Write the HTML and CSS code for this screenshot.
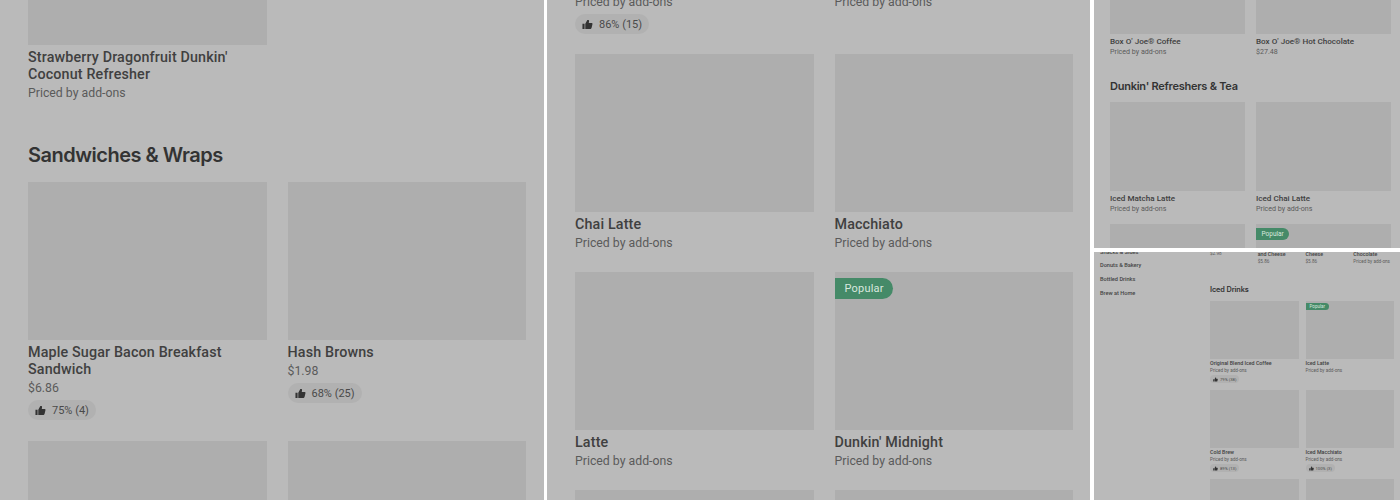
FILE: index.html
```html
<!DOCTYPE html>
<html lang="en">
<head>
    <meta charset="UTF-8">
    <title>Menu</title>
    <link rel="stylesheet" href="styles.css">
</head>
<body>
<svg class="defs" width="0" height="0">
    <symbol id="thumb" viewBox="0 0 12 12"><path d="M0.5 5.2h2.3v5.6H0.5zM3.6 5.2 5.8 1h.9c.7 0 1.1.5 1 1.2L7.4 4.4h3c.7 0 1.2.6 1 1.3l-1 4.2c-.1.5-.5.9-1 .9H3.6z"/></symbol>
</svg>
<div class="mosaic">

    <section class="panel panel-left">
        <div class="scroll">
            <div class="grid two">
                <div class="card">
                    <div class="photo cut"></div>
                    <div class="name">Strawberry Dragonfruit Dunkin' Coconut Refresher</div>
                    <div class="sub">Priced by add-ons</div>
                </div>
            </div>
            <h2>Sandwiches &amp; Wraps</h2>
            <div class="grid two">
                <div class="card">
                    <div class="photo"></div>
                    <div class="name">Maple Sugar Bacon Breakfast Sandwich</div>
                    <div class="sub">$6.86</div>
                    <div class="rating"><svg><use href="#thumb"/></svg>75% (4)</div>
                </div>
                <div class="card">
                    <div class="photo"></div>
                    <div class="name">Hash Browns</div>
                    <div class="sub">$1.98</div>
                    <div class="rating"><svg><use href="#thumb"/></svg>68% (25)</div>
                </div>
                <div class="card"><div class="photo"></div></div>
                <div class="card"><div class="photo"></div></div>
            </div>
        </div>
    </section>

    <section class="panel panel-mid">
        <div class="scroll">
            <div class="grid two">
                <div class="card">
                    <div class="sub">Priced by add-ons</div>
                    <div class="rating"><svg><use href="#thumb"/></svg>86% (15)</div>
                </div>
                <div class="card">
                    <div class="sub">Priced by add-ons</div>
                </div>
                <div class="card">
                    <div class="photo"></div>
                    <div class="name">Chai Latte</div>
                    <div class="sub">Priced by add-ons</div>
                </div>
                <div class="card">
                    <div class="photo"></div>
                    <div class="name">Macchiato</div>
                    <div class="sub">Priced by add-ons</div>
                </div>
                <div class="card">
                    <div class="photo"></div>
                    <div class="name">Latte</div>
                    <div class="sub">Priced by add-ons</div>
                </div>
                <div class="card">
                    <div class="photo"><span class="badge">Popular</span></div>
                    <div class="name">Dunkin' Midnight</div>
                    <div class="sub">Priced by add-ons</div>
                </div>
                <div class="card"><div class="photo"></div></div>
                <div class="card"><div class="photo"></div></div>
            </div>
        </div>
    </section>

    <section class="panel panel-top">
        <div class="scroll">
            <div class="grid two">
                <div class="card">
                    <div class="photo cut"></div>
                    <div class="name">Box O' Joe® Coffee</div>
                    <div class="sub">Priced by add-ons</div>
                </div>
                <div class="card">
                    <div class="photo cut"></div>
                    <div class="name">Box O' Joe® Hot Chocolate</div>
                    <div class="sub">$27.48</div>
                </div>
            </div>
            <h2>Dunkin' Refreshers &amp; Tea</h2>
            <div class="grid two">
                <div class="card">
                    <div class="photo"></div>
                    <div class="name">Iced Matcha Latte</div>
                    <div class="sub">Priced by add-ons</div>
                </div>
                <div class="card">
                    <div class="photo"></div>
                    <div class="name">Iced Chai Latte</div>
                    <div class="sub">Priced by add-ons</div>
                </div>
                <div class="card"><div class="photo"></div></div>
                <div class="card"><div class="photo"><span class="badge">Popular</span></div></div>
            </div>
        </div>
    </section>

    <section class="panel panel-bottom">
        <div class="scroll">
            <nav class="side">
                <a>Snacks &amp; Sides</a>
                <a>Donuts &amp; Bakery</a>
                <a>Bottled Drinks</a>
                <a>Brew at Home</a>
            </nav>
            <div class="content">
                <div class="grid four">
                    <div class="card"><div class="sub">$2.98</div></div>
                    <div class="card"><div class="name">and Cheese</div><div class="sub">$5.86</div></div>
                    <div class="card"><div class="name">Cheese</div><div class="sub">$5.86</div></div>
                    <div class="card"><div class="name">Chocolate</div><div class="sub">Priced by add-ons</div></div>
                </div>
                <h2>Iced Drinks</h2>
                <div class="grid two">
                    <div class="card">
                        <div class="photo"></div>
                        <div class="name">Original Blend Iced Coffee</div>
                        <div class="sub">Priced by add-ons</div>
                        <div class="rating"><svg><use href="#thumb"/></svg>79% (38)</div>
                    </div>
                    <div class="card">
                        <div class="photo"><span class="badge">Popular</span></div>
                        <div class="name">Iced Latte</div>
                        <div class="sub">Priced by add-ons</div>
                    </div>
                    <div class="card">
                        <div class="photo"></div>
                        <div class="name">Cold Brew</div>
                        <div class="sub">Priced by add-ons</div>
                        <div class="rating"><svg><use href="#thumb"/></svg>89% (13)</div>
                    </div>
                    <div class="card">
                        <div class="photo"></div>
                        <div class="name">Iced Macchiato</div>
                        <div class="sub">Priced by add-ons</div>
                        <div class="rating"><svg><use href="#thumb"/></svg>100% (3)</div>
                    </div>
                    <div class="card"><div class="photo"></div></div>
                    <div class="card"><div class="photo"></div></div>
                </div>
            </div>
        </div>
    </section>

</div>
</body>
</html>
```

FILE: styles.css
```css
html, body{
    margin: 0;
    height: 500px;
    overflow: hidden;
    background: #fff;
}
.defs{
    display: none;
}
.mosaic{
    display: grid;
    grid-template-columns: 544px 543px 307px;
    grid-template-rows: 248px 248px;
    column-gap: 3px;
    row-gap: 4px;
    width: 1400px;
    height: 500px;
    font-family: "Roboto", "Liberation Sans", sans-serif;
}
.panel{
    background: #bababa;
    overflow: hidden;
    color: #404040;
}
.panel-left, .panel-mid{
    grid-row: 1 / 3;
}
.panel-top{
    grid-column: 3;
    grid-row: 1;
    margin-left: 1px;
}
.panel-bottom{
    grid-column: 3;
    grid-row: 2;
    margin-left: 1px;
}

.grid{
    display: grid;
}
.two{
    grid-template-columns: 1fr 1fr;
}
.four{
    grid-template-columns: repeat(4, 1fr);
}
.photo{
    position: relative;
    background: #aeaeae;
}
.name{
    font-weight: 500;
}
.sub{
    color: #5a5a5a;
}
h2{
    margin: 0;
    font-family: "Inter", "Liberation Sans", sans-serif;
    font-weight: 600;
    color: #333;
}
.rating{
    display: flex;
    align-items: center;
    background: #b1b1b1;
    color: #4a4a4a;
    width: max-content;
}
.rating svg{
    fill: #333;
}
.badge{
    position: absolute;
    left: 0;
    background: #458a68;
    color: #d8e8df;
    border-radius: 0 999px 999px 0;
}

/* large panels, same scale */
.panel-left .scroll, .panel-mid .scroll{
    padding: 0 18px 0 28px;
}
.panel-left .grid, .panel-mid .grid{
    column-gap: 21px;
    row-gap: 20px;
}
.panel-left .photo, .panel-mid .photo{
    height: 158px;
}
.panel-left .name, .panel-mid .name{
    margin-top: 4px;
    font-size: 14.3px;
    line-height: 17px;
    letter-spacing: 0.15px;
}
.panel-left .sub, .panel-mid .sub{
    margin-top: 2px;
    font-size: 12.3px;
    line-height: 17px;
}
.panel-left .rating, .panel-mid .rating{
    margin-top: 3px;
    gap: 6px;
    height: 20px;
    padding: 0 7px;
    border-radius: 10px;
    font-size: 11px;
}
.panel-left .rating svg, .panel-mid .rating svg{
    width: 11px;
    height: 11px;
}
.panel-left .badge, .panel-mid .badge{
    top: 6px;
    padding: 0 9px 0 10px;
    line-height: 21px;
    font-size: 11px;
    letter-spacing: 0.2px;
}
.panel-left .cut{
    height: 45px;
}
.panel-left .grid{
    row-gap: 21px;
}
.panel-left h2{
    margin: 41px 0 15px;
    font-size: 20px;
    line-height: 24px;
    letter-spacing: -0.5px;
}
.panel-mid .scroll{
    margin-top: -8px;
    padding-right: 17px;
}
.panel-mid .rating{
    margin-top: 3px;
}

/* top right panel */
.panel-top .scroll{
    padding: 0 9px 0 16px;
}
.panel-top .grid{
    column-gap: 11px;
    row-gap: 10px;
}
.panel-top .photo{
    height: 89px;
}
.panel-top .cut{
    height: 34px;
}
.panel-top .name{
    margin-top: 2px;
    font-size: 8.1px;
    line-height: 10px;
}
.panel-top .sub{
    margin-top: 1px;
    font-size: 7.1px;
    line-height: 10px;
}
.panel-top .badge{
    top: 4px;
    padding: 0 5.5px;
    line-height: 12px;
    font-size: 6.5px;
}
.panel-top h2{
    margin: 22px 0 9px;
    font-size: 11px;
    line-height: 14px;
    letter-spacing: -0.25px;
}

/* bottom right panel */
.panel-bottom .scroll{
    display: flex;
    margin-top: -2.5px;
}
.side{
    display: flex;
    flex-direction: column;
    gap: 4.7px;
    flex: none;
    width: 116px;
    box-sizing: border-box;
    margin-top: -2px;
    padding-left: 6px;
    font-size: 5.6px;
    font-weight: 500;
    line-height: 9px;
    color: #444;
}
.content{
    flex: 1;
    padding-right: 6px;
}
.panel-bottom .grid{
    column-gap: 7px;
    row-gap: 7px;
}
.panel-bottom .photo{
    height: 58px;
}
.panel-bottom .name{
    margin-top: 1px;
    font-size: 5.3px;
    line-height: 7px;
}
.panel-bottom .sub{
    font-size: 4.64px;
    line-height: 7px;
}
.panel-bottom .rating{
    gap: 2px;
    margin-top: 1px;
    height: 8px;
    padding: 0 3px;
    font-size: 4.2px;
    border-radius: 4px;
}
.panel-bottom .rating svg{
    width: 5px;
    height: 5px;
}
.panel-bottom .badge{
    top: 2px;
    padding: 0 4px;
    line-height: 7px;
    font-size: 4.5px;
}
.panel-bottom h2{
    margin: 20.5px 0 6px;
    font-size: 7.3px;
    line-height: 10px;
    letter-spacing: -0.1px;
}
```
